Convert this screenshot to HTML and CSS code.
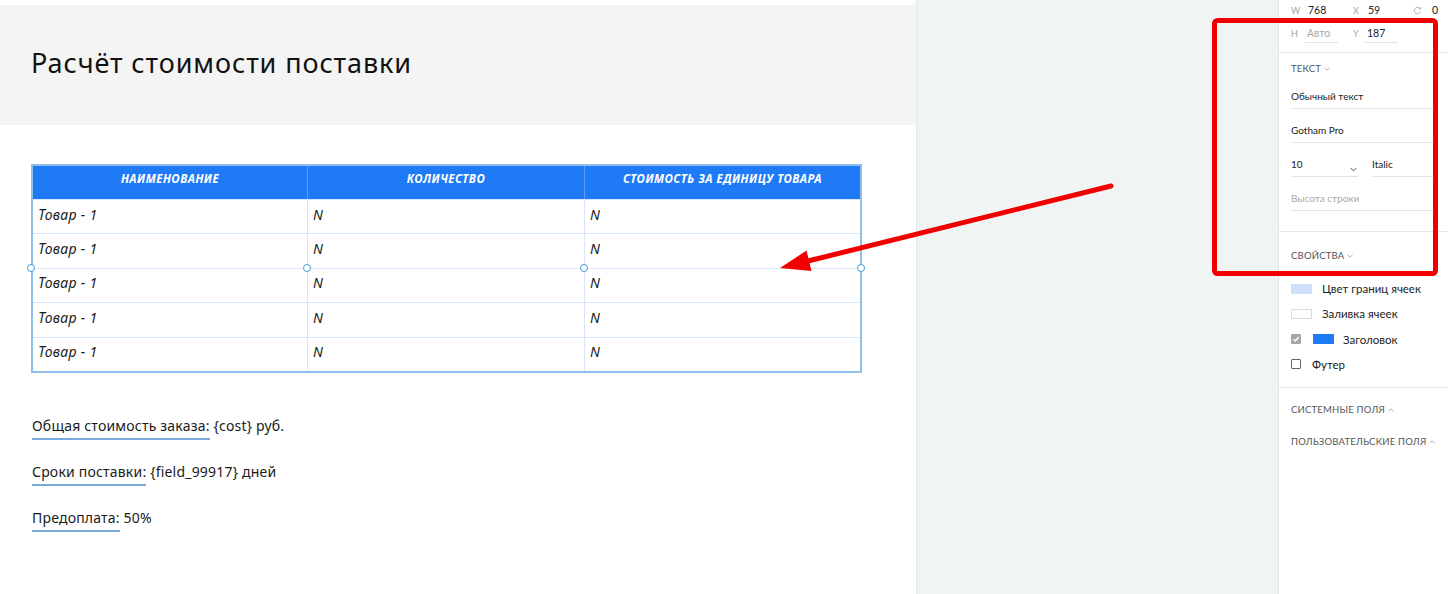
FILE: index.html
```html
<!DOCTYPE html>
<html lang="ru">
<head>
<meta charset="utf-8">
<title>Расчёт стоимости поставки</title>
<link rel="stylesheet" href="styles.css">
</head>
<body>
<div class="app">
  <main class="doc">
    <header class="doc-head"><h1>Расчёт стоимости поставки</h1></header>
    <div class="tbl-wrap">
      <div class="tbl">
        <div class="tr th"><div class="c">НАИМЕНОВАНИЕ</div><div class="c">КОЛИЧЕСТВО</div><div class="c">СТОИМОСТЬ ЗА ЕДИНИЦУ ТОВАРА</div></div>
        <div class="tr"><div class="c">Товар - 1</div><div class="c">N</div><div class="c">N</div></div>
        <div class="tr"><div class="c">Товар - 1</div><div class="c">N</div><div class="c">N</div></div>
        <div class="tr"><div class="c">Товар - 1</div><div class="c">N</div><div class="c">N</div></div>
        <div class="tr"><div class="c">Товар - 1</div><div class="c">N</div><div class="c">N</div></div>
        <div class="tr"><div class="c">Товар - 1</div><div class="c">N</div><div class="c">N</div></div>
      </div>
      <span class="handle hd1"></span>
      <span class="handle hd2"></span>
      <span class="handle hd3"></span>
      <span class="handle hd4"></span>
    </div>
    <div class="notes">
      <p><span class="lbl">Общая стоимость заказа:</span> {cost} руб.</p>
      <p><span class="lbl">Сроки поставки:</span> {field_99917} дней</p>
      <p><span class="lbl">Предоплата:</span> 50%</p>
    </div>
  </main>
  <div class="canvas"></div>
  <aside class="panel">
    <div class="dims">
      <div class="drow r1">
        <div class="grp g1"><span class="dl">W</span><span class="dv">768</span></div>
        <div class="grp g2"><span class="dl">X</span><span class="dv">59</span></div>
        <div class="grp g3">
          <svg class="rot" viewBox="0 0 10 10" width="9" height="9"><path d="M8.3 6.2A3.5 3.5 0 1 1 7.6 2.6" fill="none" stroke="#aaa" stroke-width="1"/><path d="M8.4 1.2v2.2H6.2" fill="none" stroke="#aaa" stroke-width="1"/></svg>
          <span class="dv">0</span>
        </div>
      </div>
      <div class="drow r2">
        <div class="grp g1"><span class="dl">H</span><span class="inp ph">Авто</span></div>
        <div class="grp g2"><span class="dl">Y</span><span class="inp">187</span></div>
      </div>
    </div>
    <section class="sec s-text">
      <div class="sec-h">Текст <svg class="chev" viewBox="0 0 6 4" width="6" height="4"><path d="M0.5 0.8 3 3.2 5.5 0.8" fill="none" stroke="#999" stroke-width="0.8"/></svg></div>
      <div class="field">Обычный текст</div>
      <div class="field">Gotham Pro</div>
      <div class="frow">
        <div class="field fsize">10 <svg class="chev2" viewBox="0 0 8 5" width="7" height="5"><path d="M0.8 0.8 4 4 7.2 0.8" fill="none" stroke="#444" stroke-width="1"/></svg></div>
        <div class="field fstyle">Italic</div>
      </div>
      <div class="field ph">Высота строки</div>
    </section>
    <section class="sec s-props">
      <div class="sec-h">Свойства <svg class="chev" viewBox="0 0 6 4" width="6" height="4"><path d="M0.5 0.8 3 3.2 5.5 0.8" fill="none" stroke="#999" stroke-width="0.8"/></svg></div>
      <ul class="props">
        <li><span class="sw sw-border"></span><span class="pl">Цвет границ ячеек</span></li>
        <li><span class="sw sw-fill"></span><span class="pl">Заливка ячеек</span></li>
        <li><span class="cb on"><svg viewBox="0 0 10 10" width="10" height="10"><path d="M2.4 5.2 4.3 7 7.8 3" fill="none" stroke="#fff" stroke-width="1.3"/></svg></span><span class="sw sw-head"></span><span class="pl">Заголовок</span></li>
        <li><span class="cb"></span><span class="pl">Футер</span></li>
      </ul>
    </section>
    <section class="sec s-fields">
      <div class="sec-h">Системные поля <svg class="chev" viewBox="0 0 6 4" width="6" height="4"><path d="M0.5 3.2 3 0.8 5.5 3.2" fill="none" stroke="#999" stroke-width="0.8"/></svg></div>
      <div class="sec-h second">Пользовательские поля <svg class="chev" viewBox="0 0 6 4" width="6" height="4"><path d="M0.5 3.2 3 0.8 5.5 3.2" fill="none" stroke="#999" stroke-width="0.8"/></svg></div>
    </section>
  </aside>
</div>
<svg class="overlay" viewBox="0 0 1448 594" width="1448" height="594">
  <rect x="1214.5" y="20.5" width="221" height="253" rx="3" fill="none" stroke="#f20000" stroke-width="5"/>
  <line x1="1111" y1="186" x2="806" y2="261.5" stroke="#f20000" stroke-width="5" stroke-linecap="round"/>
  <polygon points="780,268 811.5,271 806.5,250.5" fill="#f20000"/>
</svg>
</body>
</html>
```
FILE: styles.css
```css
* { box-sizing: border-box; margin: 0; padding: 0; }
html, body { width: 1448px; height: 594px; overflow: hidden; }
body {
  font-family: "Noto Sans", "Open Sans", sans-serif;
  color: #1b1b1b;
  background: #fff;
  position: relative;
}
.app { display: flex; height: 594px; }

/* document */
.doc { width: 916px; flex: none; padding-top: 5px; background: #fff; }
.doc-head {
  height: 120px;
  background: #f4f4f4;
  display: flex;
  align-items: center;
  padding-left: 31px;
  padding-bottom: 6px;
}
.doc-head h1 { font-weight: 400; font-size: 27px; line-height: 1; color: #111; letter-spacing: 0.9px; }

.tbl-wrap { position: relative; width: 831px; margin: 39px 0 0 31px; }
.tbl { border: 2px solid #8fc0ea; }
.tr {
  display: grid;
  grid-template-columns: 275px 277px 1fr;
  height: 34.4px;
  border-top: 1px solid #d8e7f7;
}
.tr .c {
  border-right: 1px solid #d8e7f7;
  display: flex;
  align-items: center;
  padding: 0 0 5px 5px;
  font-size: 14px;
  font-style: italic;
  letter-spacing: 0.3px;
  color: #1b1b1b;
}
.tr .c:last-child { border-right: none; }
.tr.th { height: 33px; border-top: none; background: #1f7af5; }
.tr.th .c {
  justify-content: center;
  padding: 0 0 8px 0;
  font-size: 11.5px;
  font-weight: 700;
  letter-spacing: 0.55px;
  color: #fff;
  border-right-color: #5c9ff5;
}
.tr.th .c:last-child { border-right: none; }

.handle {
  position: absolute;
  top: 100px;
  width: 8px;
  height: 8px;
  border: 1px solid #3f9bd8;
  border-radius: 50%;
  background: #fff;
}
.hd1 { left: -4px; }
.hd2 { left: 272px; }
.hd3 { left: 549px; }
.hd4 { left: 826px; }

.notes { margin-top: 43px; padding-left: 32px; }
.notes p { font-size: 14px; line-height: 20px; margin-bottom: 26px; letter-spacing: 0.2px; color: #1b1b1b; }
.notes .lbl { padding-bottom: 3px; border-bottom: 2px solid #7aa7dc; }

/* canvas */
.canvas { width: 362px; flex: none; background: #f0f4f5; border-left: 1px solid #e2e7ea; }

/* panel */
.panel {
  width: 170px;
  flex: none;
  background: #fff;
  border-left: 1px solid #dfe4e7;
  font-family: Lato, "Noto Sans", sans-serif;
  color: #222;
}
.dims { height: 53px; padding-left: 12px; border-bottom: 1px solid #e8e8e8; }
.drow { display: grid; grid-template-columns: 62px 59px 1fr; align-items: center; }
.drow.r1 { height: 20px; }
.drow.r2 { height: 32px; align-items: start; padding-top: 5px; }
.grp { display: flex; align-items: center; }
.g1 .dl { width: 14px; }
.g2 .dl { width: 12px; }
.dl { font-size: 9px; color: #a5a5a5; flex: none; }
.dv { font-size: 10.5px; padding-left: 3px; }
.r2 .grp { align-items: flex-end; }
.r2 .dl { padding-bottom: 4px; }
.inp {
  width: 33px;
  height: 18px;
  font-size: 10.5px;
  line-height: 13px;
  padding: 2px 0 0 2px;
  border-bottom: 1px solid #e3e3e3;
}
.ph { color: #a8a8a8; }
.g3 { padding-left: 1px; }
.rot { flex: none; }
.g3 .dv { padding-left: 10px; }

.sec { padding: 10px 10px 20px 12px; border-bottom: 1px solid #e8e8e8; }
.sec-h {
  font-size: 9.5px;
  line-height: 12px;
  color: #555;
  text-transform: uppercase;
  letter-spacing: 0.2px;
  display: flex;
  align-items: center;
  gap: 3px;
}
.field {
  height: 34px;
  border-bottom: 1px solid #e3e3e3;
  display: flex;
  align-items: flex-end;
  padding-bottom: 5px;
  font-size: 10px;
  line-height: 13px;
}
.frow { display: flex; gap: 14px; }
.fsize { width: 67px; flex: none; position: relative; }
.chev2 { position: absolute; right: 1px; bottom: 4px; }
.fstyle { flex: 1; }

.s-props { padding-top: 18px; padding-bottom: 10px; }
.props { list-style: none; padding-top: 14px; }
.props li { height: 25.25px; display: flex; align-items: center; }
.sw { width: 21px; height: 10px; flex: none; margin-right: 10px; }
.sw-border { background: #cfe1fa; }
.sw-fill { background: #fff; border: 1px solid #dcdcdc; }
.sw-head { background: #1f7af5; margin-left: 12px; margin-right: 9px; }
.cb {
  width: 10px;
  height: 10px;
  flex: none;
  border: 1px solid #666;
  border-radius: 1px;
  margin-right: 11px;
  display: flex;
}
.cb.on { background: #a2a6aa; border-color: #a2a6aa; margin-right: 0; }
.cb svg { margin: -1px; }
.pl { font-size: 11.5px; color: #222; }

.s-fields { padding-top: 16px; border-bottom: none; }
.sec-h.second { margin-top: 20px; }

.overlay { position: absolute; left: 0; top: 0; pointer-events: none; }
```
